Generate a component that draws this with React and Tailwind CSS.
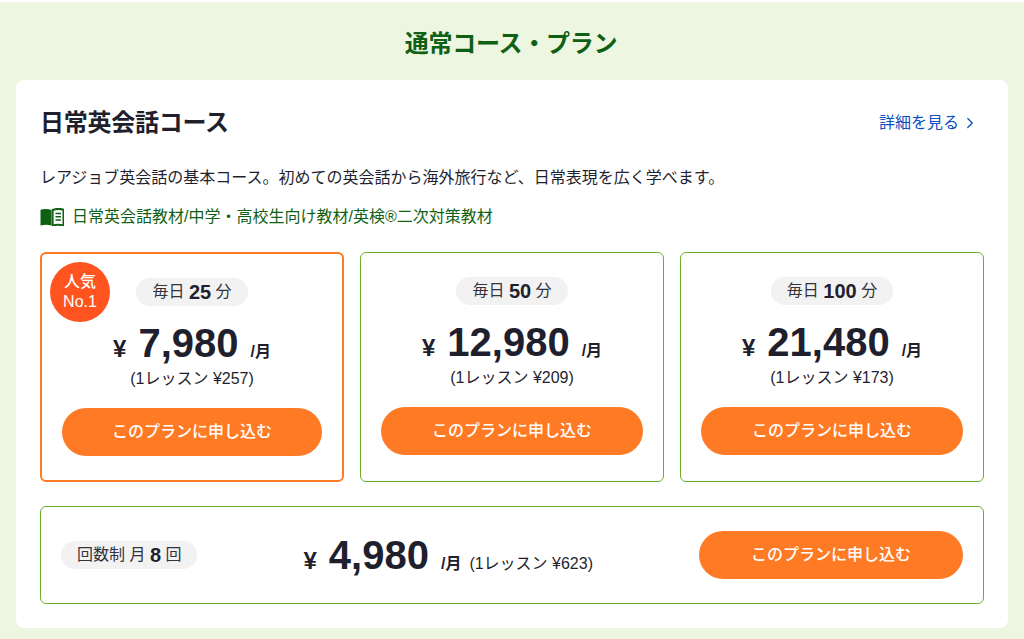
import React from 'react';
import { ChevronRight } from 'lucide-react';

const plans = [
  { minutes: 25, price: '7,980', lesson: '¥257', popular: true },
  { minutes: 50, price: '12,980', lesson: '¥209' },
  { minutes: 100, price: '21,480', lesson: '¥173' },
];

function BookIcon() {
  return (
    <svg width="24" height="18" viewBox="0 0 24 18" className="shrink-0">
      <path d="M0.5 1.8C4 0.6 8 0.6 11.4 2V17.6C8 16.4 4 16.4 0.5 17.6Z" fill="#0f5f14" />
      <path d="M12.6 2C16 0.6 20 0.6 23.5 1.8V17.6C20 16.4 16 16.4 12.6 17.6Z" fill="none" stroke="#0f5f14" strokeWidth="2" />
      <path d="M15.5 5.5H21M15.5 8.8H21M15.5 12H21" stroke="#0f5f14" strokeWidth="1.4" />
    </svg>
  );
}

function ApplyButton({ className }) {
  return (
    <button className={`h-12 rounded-full bg-[#ff7a24] text-white text-base font-medium ${className}`}>
      このプランに申し込む
    </button>
  );
}

function Pill({ children }) {
  return (
    <span className="inline-flex items-center h-7 px-4 rounded-full bg-[#f2f2f3] text-base text-[#33333d]">
      {children}
    </span>
  );
}

function Price({ price }) {
  return (
    <div className="flex items-baseline font-bold text-[#1f1f2e]">
      <span className="text-2xl mr-3">¥</span>
      <span className="text-[40px] leading-[48px]">{price}</span>
      <span className="text-base ml-3">/月</span>
    </div>
  );
}

function PlanCard({ plan }) {
  const border = plan.popular ? 'border-2 border-[#ff7a24]' : 'border border-[#6aaf2c]';
  return (
    <div className={`relative flex flex-col items-center h-[230px] pt-6 rounded-md ${border}`}>
      {plan.popular && (
        <div className="absolute left-[8px] top-[8px] w-[60px] h-[60px] rounded-full bg-[#ff5420] text-white text-base font-medium leading-5 flex flex-col items-center justify-center">
          <span>人気</span>
          <span>No.1</span>
        </div>
      )}
      <Pill>
        毎日&nbsp;<b className="text-[20px] text-[#1f1f2e]">{plan.minutes}</b>&nbsp;分
      </Pill>
      <div className="mt-[13px]">
        <Price price={plan.price} />
      </div>
      <p className="mt-[2px] text-base leading-5 text-[#1f1f2e]">(1レッスン {plan.lesson})</p>
      <ApplyButton className={plan.popular ? 'w-[260px] mt-[19px]' : 'w-[262px] mt-[19px]'} />
    </div>
  );
}

export default function App() {
  return (
    <div className="pt-[2px] bg-white font-['Liberation_Sans','Noto_Sans_CJK_JP',sans-serif]">
      <div className="h-[637px] px-4 bg-[#ecf6e1]">
        <h2 className="h-[78px] flex items-center justify-center pt-[6px] pr-[2px] text-[24px] tracking-[-0.01em] font-bold text-[#0f5f14]">
          通常コース・プラン
        </h2>
        <div className="h-[548px] rounded-lg bg-white px-6 pt-6">
          <div className="flex items-center justify-between h-9 mt-px">
            <h3 className="text-[24px] tracking-[-0.01em] font-bold text-[#1f1f2e]">日常英会話コース</h3>
            <a className="flex items-center text-base text-[#0b4fc0] mr-[5px]">
              詳細を見る
              <ChevronRight className="w-[18px] h-[18px] ml-[2px]" strokeWidth={1.7} />
            </a>
          </div>
          <p className="mt-[27px] text-base leading-5 text-[#1f1f2e]">
            レアジョブ英会話の基本コース。初めての英会話から海外旅行など、日常表現を広く学べます。
          </p>
          <div className="flex items-center gap-2 mt-[19px] text-base leading-5 text-[#0f5f14]">
            <BookIcon />
            <span>日常英会話教材/中学・高校生向け教材/英検®二次対策教材</span>
          </div>
          <div className="grid grid-cols-3 gap-4 mt-[25px]">
            {plans.map((plan) => (
              <PlanCard key={plan.minutes} plan={plan} />
            ))}
          </div>
          <div className="flex items-center justify-between h-[98px] mt-6 px-5 border border-[#6aaf2c] rounded-md">
            <Pill>
              回数制 月&nbsp;<b className="text-[20px] text-[#1f1f2e]">8</b>&nbsp;回
            </Pill>
            <div className="flex items-baseline">
              <Price price="4,980" />
              <span className="text-base ml-2 text-[#1f1f2e]">(1レッスン ¥623)</span>
            </div>
            <ApplyButton className="w-[264px]" />
          </div>
        </div>
      </div>
    </div>
  );
}
